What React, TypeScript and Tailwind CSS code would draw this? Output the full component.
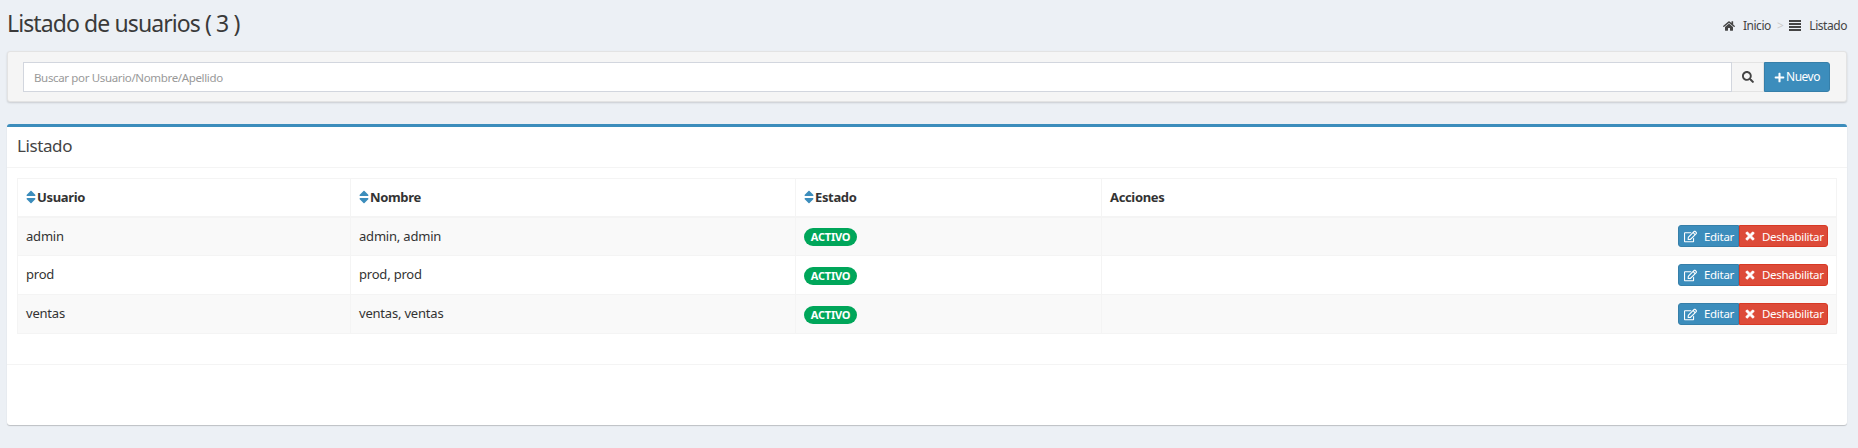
import { FaHome, FaPlus, FaRegEdit, FaSearch, FaSort, FaTimes } from "react-icons/fa";

const users = [
  { usuario: "admin", nombre: "admin, admin" },
  { usuario: "prod", nombre: "prod, prod" },
  { usuario: "ventas", nombre: "ventas, ventas" },
];

function ListIcon() {
  return (
    <svg viewBox="0 0 12 12" className="mr-[8px] h-[12px] w-[12px] fill-current">
      <rect x="0" y="0" width="12" height="2" />
      <rect x="0" y="3" width="12" height="2" />
      <rect x="0" y="6" width="12" height="2" />
      <rect x="0" y="9" width="12" height="2" />
    </svg>
  );
}

function SortHeader({ label }: { label: string }) {
  return (
    <th className="border border-b-2 border-[#f4f4f4] px-[8px] text-left font-bold">
      <span className="flex items-center tracking-[-0.35px]">
        <FaSort className="mr-[1px] h-[16px] w-[10px] text-[#3c8dbc]" />
        {label}
      </span>
    </th>
  );
}

export default function App() {
  return (
    <div className="h-[448px] overflow-hidden bg-[#ecf0f5] pl-[7px] pr-[11px] font-['Noto_Sans',sans-serif] text-[14px] text-[#333]">
      {/* Title */}
      <div className="flex h-[51px] items-start justify-between">
        <h1 className="mt-[6px] text-[23px] leading-[34px] tracking-[-0.9px] text-[#3a3a3a]">Listado de usuarios ( 3 )</h1>
        <div className="mt-[17px] flex items-center text-[12px] leading-[18px] tracking-[-0.45px] text-[#444]">
          <FaHome className="mr-[8px] h-[12px] w-[12px]" />
          <span>Inicio</span>
          <span className="mx-[6px] text-[#ccc]">&gt;</span>
          <ListIcon />
          <span>Listado</span>
        </div>
      </div>

      {/* Search */}
      <div className="flex h-[51px] items-start rounded-[3px] border border-[#e3e3e3] bg-[#f5f5f5] pl-[15px] pr-[16px] pt-[10px] shadow-[0_1px_2px_rgba(0,0,0,0.15)]">
        <input
          readOnly
          placeholder="Buscar por Usuario/Nombre/Apellido"
          className="h-[30px] min-w-0 flex-1 border border-[#d2d6de] bg-white px-[10px] text-[11.5px] tracking-[-0.35px] placeholder:text-[#999]"
        />
        <span className="flex h-[30px] w-[32px] items-center justify-center border-y border-r border-[#e3e3e3] text-[#444]">
          <FaSearch className="h-[12px] w-[12px]" />
        </span>
        <button className="flex h-[30px] w-[66px] items-center justify-center rounded-r-[3px] border border-[#367fa9] bg-[#3c8dbc] text-[12px] tracking-[-0.5px] text-white">
          <FaPlus className="mr-[1px] h-[11px] w-[11px]" />
          Nuevo
        </button>
      </div>

      {/* List */}
      <div className="mt-[22px] h-[301px] rounded-[3px] border-t-[3px] border-[#3c8dbc] bg-white shadow-[0_1px_1px_rgba(0,0,0,0.2)]">
        <div className="flex h-[41px] items-center border-b border-[#f4f4f4] px-[10px] pb-[2px]">
          <h3 className="text-[17px] tracking-[-0.4px] text-[#444]">Listado</h3>
        </div>
        <div className="h-[197px] border-b border-[#f4f4f4] p-[10px]">
          <table className="w-full table-fixed border-collapse text-[13px] tracking-[-0.2px]">
            <colgroup>
              <col className="w-[333px]" />
              <col className="w-[445px]" />
              <col className="w-[306px]" />
              <col />
            </colgroup>
            <thead>
              <tr className="h-[38px]">
                <SortHeader label="Usuario" />
                <SortHeader label="Nombre" />
                <SortHeader label="Estado" />
                <th className="border border-b-2 border-[#f4f4f4] px-[8px] text-left font-bold tracking-[-0.35px]">Acciones</th>
              </tr>
            </thead>
            <tbody>
              {users.map((user, i) => (
                <tr key={user.usuario} className={`h-[39px] ${i % 2 === 0 ? "bg-[#f9f9f9]" : "bg-white"}`}>
                  <td className="border border-[#f4f4f4] px-[8px]">{user.usuario}</td>
                  <td className="border border-[#f4f4f4] px-[8px]">{user.nombre}</td>
                  <td className="border border-[#f4f4f4] px-[8px]">
                    <span className="mt-[2px] inline-flex h-[18px] w-[53px] items-center justify-center rounded-full bg-[#00a65a] text-[11px] font-bold tracking-[-0.2px] text-white">
                      ACTIVO
                    </span>
                  </td>
                  <td className="border border-[#f4f4f4] px-[8px]">
                    <div className="flex justify-end">
                      <button className="flex h-[22px] w-[61px] items-center gap-[7px] rounded-l-[3px] border border-[#367fa9] bg-[#3c8dbc] pl-[5px] text-[11.5px] tracking-[-0.3px] text-white">
                        <FaRegEdit className="h-[13px] w-[13px]" />
                        Editar
                      </button>
                      <button className="flex h-[22px] w-[89px] items-center gap-[7px] rounded-r-[3px] border border-[#d73925] bg-[#dd4b39] pl-[5px] text-[11.5px] tracking-[-0.3px] text-white">
                        <FaTimes className="h-[12px] w-[10px] stroke-current stroke-[30px]" />
                        Deshabilitar
                      </button>
                    </div>
                  </td>
                </tr>
              ))}
            </tbody>
          </table>
        </div>
      </div>
    </div>
  );
}
